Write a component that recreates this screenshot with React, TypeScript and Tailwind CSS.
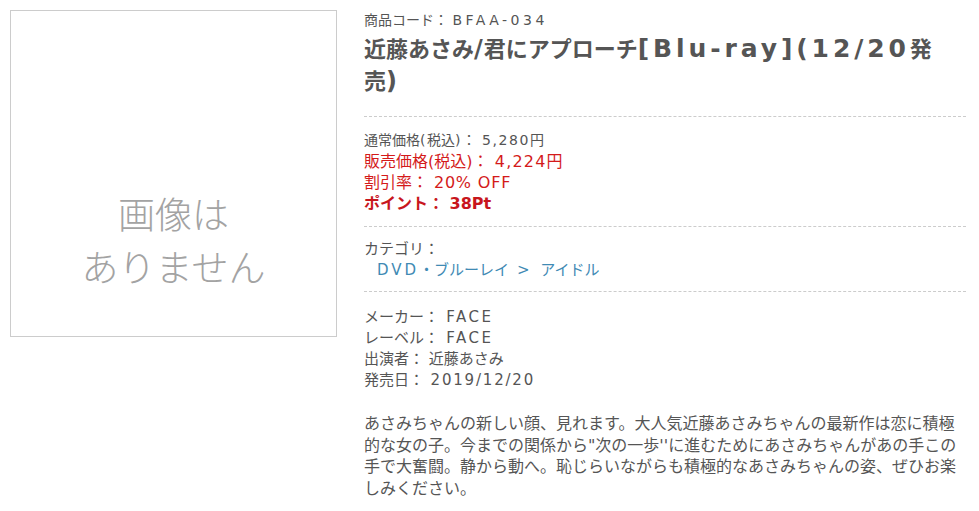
const Dashed = () => <div className="border-t border-dashed border-[#ccc]" />;

// ラテン文字部分だけ字間を広げる（Meiryo風の見た目に寄せる）
const L = ({ children, className = "" }: { children: React.ReactNode; className?: string }) => (
  <span className={className}>{children}</span>
);

export default function App() {
  return (
    <div className="flex gap-[27px] bg-white pl-[10px] pt-[10px] font-[family-name:'DejaVu_Sans','Noto_Sans_CJK_JP',sans-serif] text-[#555]">
      <div className="flex h-[327px] w-[327px] shrink-0 flex-col items-center border border-[#ccc] pt-[176px] font-[family-name:'Noto_Sans_CJK_JP',sans-serif] text-[37px] font-light leading-[53px] text-[#a3a3a3]">
        <div>画像は</div>
        <div>ありません</div>
      </div>

      <div className="w-[602px]">
        <div className="text-[14px] leading-[20px]">
          商品コード： <L className="tracking-[3.5px]">BFAA-034</L>
        </div>
        <h1 className="mt-[4px] text-[22px] font-bold leading-[32px] text-[#555]">
          近藤あさみ<L className="text-[24px] leading-[20px] tracking-[1px]">/</L>君にアプローチ
          <L className="text-[25px] leading-[20px] tracking-[3.9px]">[Blu-ray](12/20</L>発
          <br />
          売<L className="text-[24px] leading-[20px]">)</L>
        </h1>

        <div className="mt-[18px]">
          <Dashed />
        </div>

        <div className="pb-[12px] pt-[13px] leading-[21px]">
          <div className="text-[14px]">
            通常価格<L className="tracking-[1.5px]">(</L>税込<L className="tracking-[1.5px]">)</L>：
            <L className="tracking-[1.6px]"> 5,280</L>円
          </div>
          <div className="text-[16px] text-[#d41a1a]">
            販売価格(税込)：<L className="tracking-[1.2px]"> 4,224</L>円
          </div>
          <div className="text-[16px] text-[#d41a1a]">
            割引率：<L className="tracking-[0.8px]"> 20% OFF</L>
          </div>
          <div className="text-[16px] font-bold text-[#c8161d]">ポイント： 38Pt</div>
        </div>
        <Dashed />

        <div className="pb-[10px] pt-[12px] text-[15px] leading-[21px]">
          <div>カテゴリ：</div>
          <div className="pl-[13px] text-[#3f8ab4]">
            <a href="#">
              <L className="tracking-[3px]">DVD</L>・ブルーレイ
            </a>
            <L className="tracking-[3px]"> &gt; </L>
            <a href="#">アイドル</a>
          </div>
        </div>
        <Dashed />

        <div className="pt-[15px] text-[15px] leading-[21px]">
          <div>
            メーカー：<L className="tracking-[2.5px]"> FACE</L>
          </div>
          <div>
            レーベル：<L className="tracking-[2.5px]"> FACE</L>
          </div>
          <div>出演者： 近藤あさみ</div>
          <div>
            発売日：<L className="tracking-[1.8px]"> 2019/12/20</L>
          </div>
        </div>

        <p className="mt-[22px] text-[16px] leading-[21.7px]">
          あさみちゃんの新しい顔、見れます。大人気近藤あさみちゃんの最新作は恋に積極的な女の子。今までの関係から"次の一歩''に進むためにあさみちゃんがあの手この手で大奮闘。静から動へ。恥じらいながらも積極的なあさみちゃんの姿、ぜひお楽しみください。
        </p>
      </div>
    </div>
  );
}
